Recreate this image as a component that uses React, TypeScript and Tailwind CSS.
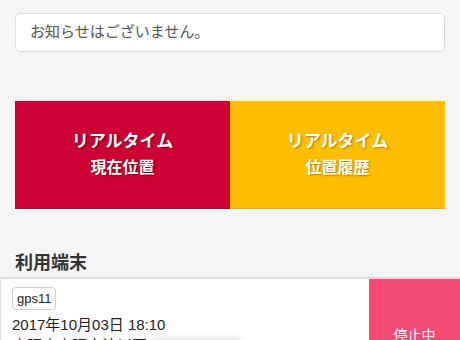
export default function App() {
  return (
    <div
      className="h-[340px] w-[460px] overflow-hidden bg-[#f5f5f5] text-[#333]"
      style={{ fontFamily: '"Liberation Sans", "Noto Sans CJK JP", sans-serif' }}
    >
      <div className="px-[15px] pt-[13px]">
        <div className="flex h-[39px] items-center rounded-[5px] border border-[#dcdcdc] bg-white px-[14px] text-[15px] text-[#555]">
          お知らせはございません。
        </div>
      </div>

      <div className="mt-[49px] flex px-[15px]">
        <button className="flex h-[108px] flex-1 flex-col items-center justify-center border-b border-[#b8002d] bg-[#cc0033] text-[17px] font-bold leading-[26px] text-white [text-shadow:1px_1px_2px_rgba(0,0,0,0.45)]">
          <span>リアルタイム</span>
          <span className="text-[16px]">現在位置</span>
        </button>
        <button className="flex h-[108px] flex-1 flex-col items-center justify-center border-b border-[#f0b000] bg-[#ffbf00] text-[17px] font-bold leading-[26px] text-white [text-shadow:1px_1px_2px_rgba(0,0,0,0.35)]">
          <span>リアルタイム</span>
          <span className="text-[16px]">位置履歴</span>
        </button>
      </div>

      <h2 className="mt-[41px] px-[15px] text-[18px] font-bold leading-[26px] text-[#333]">
        利用端末
      </h2>

      <div className="mt-[1px] flex h-[80px] border-t-2 border-l border-[#dddddd] bg-white">
        <div className="flex-1 pl-[11px] pt-[7px] text-[#222]">
          <span className="inline-block rounded-[4px] border border-[#cfcfcf] px-[4px] text-[13px] leading-[21px]">
            gps11
          </span>
          <div className="mt-[4px] text-[15px] leading-[21px]">
            2017年10月03日 18:10
          </div>
          <div className="flex items-center text-[15px] leading-[21px]">
            <span>大阪府大阪市淀川区</span>
            <span className="ml-[2px] h-[16px] w-[95px] rounded-full bg-[#e4e4e4] blur-[3px]" />
          </div>
        </div>
        <div className="flex w-[91px] items-start justify-center bg-[#f44a74] pt-[46px] text-[14px] text-white">
          停止中
        </div>
      </div>
    </div>
  );
}
